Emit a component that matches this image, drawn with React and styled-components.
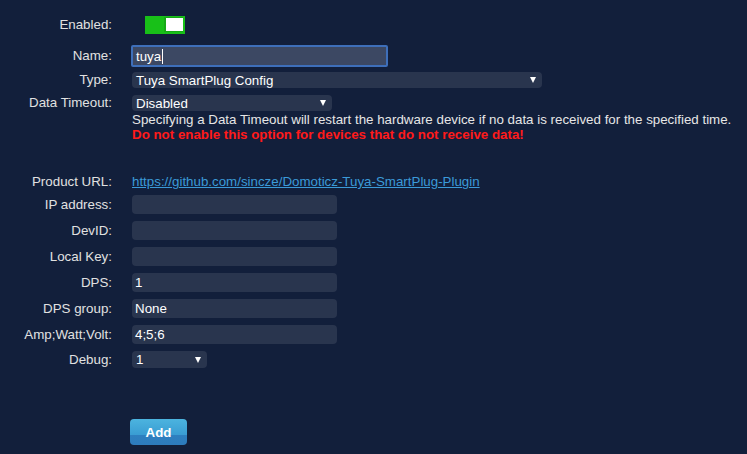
import React from "react";
import styled, { createGlobalStyle } from "styled-components";

const Global = createGlobalStyle`
  html, body { margin: 0; padding: 0; background: #121f3b; }
  body { font-family: "Liberation Sans", Arial, sans-serif; font-size: 13.33px; color: #e3e3e3; }
`;

const Page = styled.div`
  width: 747px;
  height: 454px;
  background: #121f3b;
  overflow: hidden;
  display: flex;
  flex-direction: column;
`;

const Row = styled.div`
  display: flex;
  align-items: ${(p) => (p.$top ? "flex-start" : "center")};
  margin-top: ${(p) => p.$mt || 0}px;
  height: ${(p) => (p.$h ? p.$h + "px" : "auto")};
`;

const Label = styled.div`
  width: 112px;
  text-align: right;
  color: #e1e1e1;
  line-height: 16px;
  flex: none;
`;

const Field = styled.div`
  margin-left: ${(p) => p.$ml ?? 20}px;
  display: flex;
  flex-direction: column;
`;

const Toggle = styled.div`
  margin-left: 33px;
  width: 40px;
  height: 18px;
  background: #18c018;
  position: relative;
`;

const Knob = styled.div`
  position: absolute;
  left: 21px;
  top: 2px;
  width: 17px;
  height: 13px;
  background: #ffffff;
  box-shadow: -1px 0 0 1px #16a816;
`;

const TextInput = styled.div`
  box-sizing: border-box;
  width: ${(p) => p.$w}px;
  height: ${(p) => p.$h || 19}px;
  background: ${(p) => (p.$focus ? "#3c4863" : "#29354e")};
  border: ${(p) => (p.$focus ? "2px solid #3e6fba" : "none")};
  border-radius: ${(p) => (p.$focus ? "2px" : "4px")};
  color: #ffffff;
  font-size: 13.33px;
  padding-left: 3px;
  display: flex;
  align-items: center;
`;

const Caret = styled.span`
  display: inline-block;
  width: 1px;
  height: 15px;
  background: #ffffff;
  margin-left: 1px;
`;

const Select = styled.div`
  box-sizing: border-box;
  width: ${(p) => p.$w}px;
  height: ${(p) => p.$h || 16}px;
  background: #29354e;
  border-radius: 4px;
  color: #ffffff;
  font-size: 13.33px;
  padding: 0 6px 0 4px;
  display: flex;
  align-items: center;
  justify-content: space-between;
`;

const Arrow = styled.span`
  width: 0;
  height: 0;
  border-left: 3.5px solid transparent;
  border-right: 3.5px solid transparent;
  border-top: 6px solid #ffffff;
`;

const Help = styled.div`
  line-height: 15px;
  color: #e6e6e6;
  margin-top: 1px;
  white-space: nowrap;
`;

const Warn = styled.div`
  line-height: 15px;
  color: #ff1a1a;
  font-weight: bold;
  white-space: nowrap;
`;

const Link = styled.a`
  color: #3b9ad8;
  text-decoration: underline;
  line-height: 16px;
`;

const Button = styled.div`
  margin-left: 130px;
  margin-top: ${(p) => p.$mt}px;
  width: 57px;
  height: 26px;
  border-radius: 4px;
  background: linear-gradient(#4cb4df, #3a9dd3 60%, #2e7fbf 62%, #2d7cbd);
  color: #ffffff;
  font-size: 13.33px;
  font-weight: bold;
  display: flex;
  align-items: center;
  justify-content: center;
`;

const fields = [
  ["IP address:", ""],
  ["DevID:", ""],
  ["Local Key:", ""],
  ["DPS:", "1"],
  ["DPS group:", "None"],
  ["Amp;Watt;Volt:", "4;5;6"],
];

export default function App() {
  return (
    <Page>
      <Global />
      <Row $mt={16} $h={18}>
        <Label>Enabled:</Label>
        <Toggle>
          <Knob />
        </Toggle>
      </Row>
      <Row $mt={11} $h={22}>
        <Label>Name:</Label>
        <Field $ml={19}>
          <TextInput $focus $w={257} $h={22}>
            tuya<Caret />
          </TextInput>
        </Field>
      </Row>
      <Row $mt={5} $h={16}>
        <Label>Type:</Label>
        <Field>
          <Select $w={410}>
            Tuya SmartPlug Config
            <Arrow />
          </Select>
        </Field>
      </Row>
      <Row $mt={7} $top>
        <Label>Data Timeout:</Label>
        <Field>
          <Select $w={200}>
            Disabled
            <Arrow />
          </Select>
          <Help>
            Specifying a Data Timeout will restart the hardware device if no data is received for the specified time.
          </Help>
          <Warn>Do not enable this option for devices that do not receive data!</Warn>
        </Field>
      </Row>
      <Row $mt={32} $h={16}>
        <Label>Product URL:</Label>
        <Field>
          <Link href="#">https://github.com/sincze/Domoticz-Tuya-SmartPlug-Plugin</Link>
        </Field>
      </Row>
      {fields.map(([l, v], i) => (
        <Row key={l} $mt={i === 0 ? 5 : 7} $h={19}>
          <Label>{l}</Label>
          <Field>
            <TextInput $w={205}>{v}</TextInput>
          </Field>
        </Row>
      ))}
      <Row $mt={7} $h={17}>
        <Label>Debug:</Label>
        <Field>
          <Select $w={75} $h={17}>
            1
            <Arrow />
          </Select>
        </Field>
      </Row>
      <Button $mt={51}>Add</Button>
    </Page>
  );
}
